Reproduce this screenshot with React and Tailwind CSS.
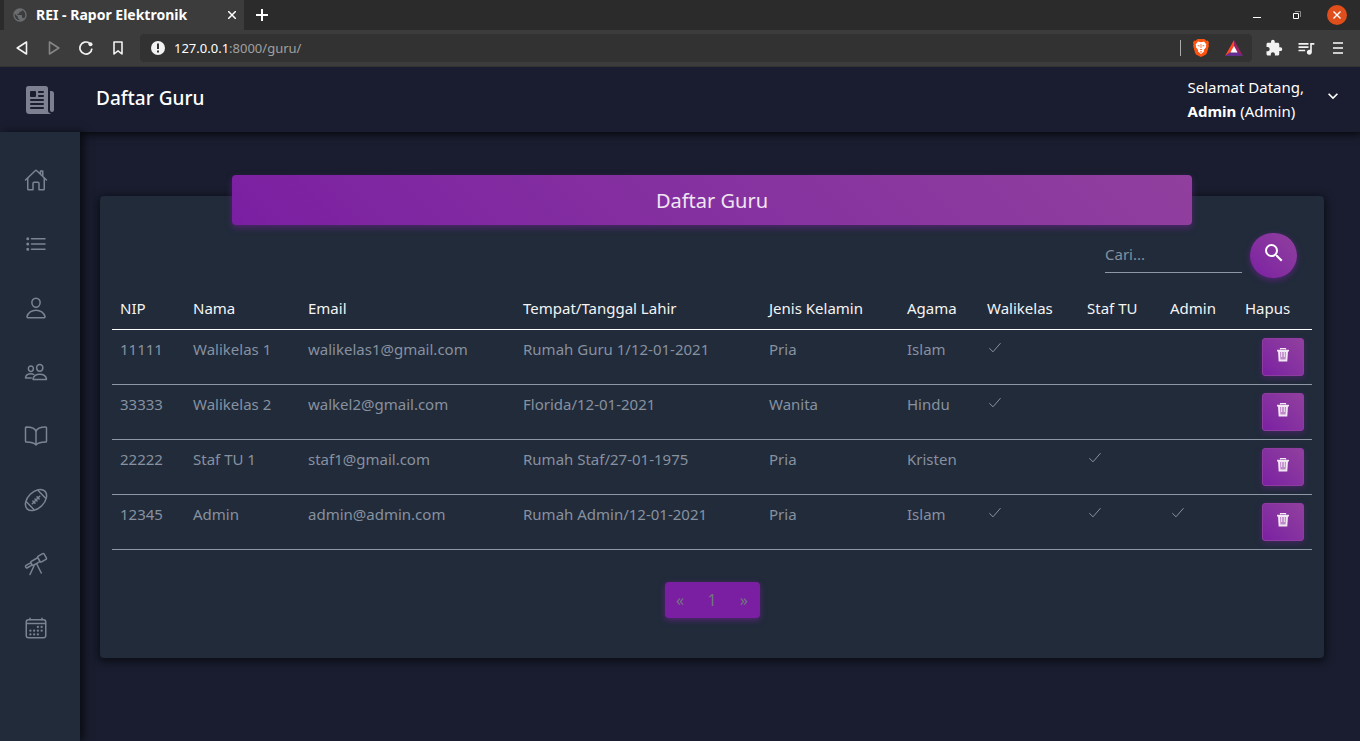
import React from "react";
import {
  IoHomeOutline,
  IoListOutline,
  IoPersonOutline,
  IoPeopleOutline,
  IoBookOutline,
  IoAmericanFootballOutline,
  IoTelescopeOutline,
  IoCalendarOutline,
  IoNewspaper,
} from "react-icons/io5";
import {
  MdSearch,
  MdExtension,
  MdQueueMusic,
  MdKeyboardArrowDown,
  MdPublic,
} from "react-icons/md";

const menu = [
  ["Beranda", IoHomeOutline],
  ["Daftar", IoListOutline],
  ["Guru", IoPersonOutline],
  ["Siswa", IoPeopleOutline],
  ["Mata Pelajaran", IoBookOutline],
  ["Ekskul", IoAmericanFootballOutline],
  ["Proyek", IoTelescopeOutline],
  ["Kalender", IoCalendarOutline],
];

const rows = [
  ["11111", "Walikelas 1", "walikelas1@gmail.com", "Rumah Guru 1/12-01-2021", "Pria", "Islam", true, false, false],
  ["33333", "Walikelas 2", "walkel2@gmail.com", "Florida/12-01-2021", "Wanita", "Hindu", true, false, false],
  ["22222", "Staf TU 1", "staf1@gmail.com", "Rumah Staf/27-01-1975", "Pria", "Kristen", false, true, false],
  ["12345", "Admin", "admin@admin.com", "Rumah Admin/12-01-2021", "Pria", "Islam", true, true, true],
];

const columns = [
  ["NIP", "w-[73px]"],
  ["Nama", "w-[115px]"],
  ["Email", "w-[215px]"],
  ["Tempat/Tanggal Lahir", "w-[246px]"],
  ["Jenis Kelamin", "w-[138px]"],
  ["Agama", "w-[80px]"],
  ["Walikelas", "w-[100px]"],
  ["Staf TU", "w-[83px]"],
  ["Admin", "w-[75px]"],
  ["Hapus", "w-[75px]"],
];

function Check() {
  return (
    <svg className="mt-[3px]" width="16" height="16" viewBox="0 0 16 16" fill="none" stroke="currentColor" strokeWidth="1" role="img" aria-label="Ya">
      <path d="M2.3 8.2 6 11.8 13.5 3.2" />
    </svg>
  );
}

function Trash() {
  return (
    <svg width="16" height="16" viewBox="0 0 16 16" aria-hidden="true">
      <path d="M5.5 2.5V1.6h5v.9" fill="none" stroke="#f1e8f4" strokeWidth="1.2" />
      <path d="M2 2.8h12v1.7H2z" fill="#f1e8f4" />
      <path d="M3 4h10l-.7 10.5H3.7z" fill="#f1e8f4" />
      <path d="M5 5h6l-.4 7.6H5.4z" fill="#bd87c8" />
      <path d="M6.7 5v5M9.3 5v5" stroke="#f1e8f4" strokeWidth="1" />
    </svg>
  );
}

function BraveShield() {
  return (
    <svg width="16" height="18" viewBox="0 0 16 18" aria-hidden="true">
      <path d="M4.5 0h7l1.8 1.7 1.4-.2L16 3.6l-.5 1.6.4 1.5-2 7.2c-.3 1-1 1.6-1.8 2.2L8 18l-4.1-1.9c-.8-.6-1.5-1.2-1.8-2.2L.1 6.7l.4-1.5L0 3.6l1.3-2.1 1.4.2z" fill="#fb5310" />
      <path d="m8 3.2 3-.7 2.4 3-.5 1.200.3 1.400-2.400 2.800.2 1.600L8 14.900l-3-2.400.2-1.600L2.800 8.100l.3-1.400-.5-1.200L5 2.500z" fill="#fff" />
      <path d="m4.200 6 2.400.5-.5 1.300zM11.800 6l-2.400.5.5 1.300zM7.600 5h.8v4h-.8zM6.500 10h3L8 11.200zM6.700 12.800 8 12.300l1.300.5L8 13.700z" fill="#fb5310" />
    </svg>
  );
}

function BatTriangle() {
  return (
    <svg width="18" height="16" viewBox="0 0 18 16" aria-hidden="true">
      <path d="M9 0 0 16l9-6z" fill="#ff4724" />
      <path d="m9 0 9 16-9-6z" fill="#9e1f63" />
      <path d="M0 16h18l-9-6z" fill="#662d91" />
      <path d="m9 6 3.600 6.400H5.400z" fill="#fff" />
    </svg>
  );
}

function Browser() {
  return (
    <div className="relative z-30 bg-[#3c3c3c]">
      <div className="flex h-[30px] items-stretch bg-[#2b2b2b] pl-1">
        <div className="flex w-60 items-center bg-[#3c3c3c] pr-1 pl-2 text-white">
          <MdPublic className="size-4 text-[#6a6d70]" />
          <span className="ml-2 grow whitespace-nowrap text-sm font-bold">REI - Rapor Elektronik</span>
          <button aria-label="Tutup tab" className="flex size-4 items-center justify-center">
            <svg width="8" height="8" viewBox="0 0 8 8" stroke="currentColor" strokeWidth="1.500"><path d="m0 0 8 8M8 0 0 8" /></svg>
          </button>
        </div>
        <button aria-label="Tab baru" className="flex w-9 items-center justify-center text-white">
          <svg width="12" height="12" viewBox="0 0 12 12" stroke="currentColor" strokeWidth="2"><path d="M6 0v12M0 6h12" /></svg>
        </button>
        <div className="ml-auto flex items-center gap-5 pr-[13px] text-white">
          <button aria-label="Minimalkan" className="flex size-5 items-center justify-center">
            <svg width="8" height="8" viewBox="0 0 8 8"><path d="M0 6h8v1H0z" fill="currentColor" /></svg>
          </button>
          <button aria-label="Pulihkan" className="flex size-5 items-center justify-center">
            <svg width="8" height="8" viewBox="0 0 8 8" fill="none"><path d="M.5 2.500h5v5h-5z" stroke="#fff" /><path d="M2 .5h5.500V6" stroke="#8a8a8a" /></svg>
          </button>
          <button aria-label="Tutup" className="flex size-5 items-center justify-center rounded-full bg-[#e04e1b]">
            <svg width="8" height="8" viewBox="0 0 8 8" stroke="currentColor" strokeWidth="1.400"><path d="m.5.5 7 7m0-7-7 7" /></svg>
          </button>
        </div>
      </div>
      <div className="flex h-[37px] items-center border-b border-[#333] px-3 text-[#f2f2f2]">
        <div className="flex items-center gap-3">
          <button aria-label="Kembali" className="flex size-5 items-center justify-center">
            <svg width="12" height="14" viewBox="0 0 12 14" fill="none" stroke="currentColor" strokeWidth="1.600" strokeLinejoin="round"><path d="M10.500 1v12L1.200 7z" /></svg>
          </button>
          <button aria-label="Maju" className="flex size-5 items-center justify-center text-[#858585]">
            <svg width="12" height="14" viewBox="0 0 12 14" fill="none" stroke="currentColor" strokeWidth="1.600" strokeLinejoin="round"><path d="M1.500 1v12L10.800 7z" /></svg>
          </button>
          <button aria-label="Muat ulang" className="flex size-5 items-center justify-center">
            <svg width="14" height="14" viewBox="0 0 14 14" fill="none" stroke="currentColor" strokeWidth="1.700"><path d="M12.900 7.600A6 6 0 1 1 10.500 2.200" /><circle cx="11.500" cy="3.300" r="2" fill="currentColor" stroke="none" /></svg>
          </button>
          <button aria-label="Markah" className="flex size-5 items-center justify-center">
            <svg width="10" height="14" viewBox="0 0 10 14" fill="none" stroke="currentColor" strokeWidth="1.600" strokeLinejoin="round"><path d="M1 1h8v12L5 9.800 1 13z" /></svg>
          </button>
        </div>
        <div className="ml-3 flex h-7 grow items-center rounded bg-[#323232] pr-[9px] pl-[11px]">
          <svg width="14" height="14" viewBox="0 0 14 14" aria-hidden="true">
            <circle cx="7" cy="7" r="7" fill="#f2f2f2" />
            <path d="M6 2.500h2v5.500H6zM6 9.500h2v2H6z" fill="#323232" />
          </svg>
          <span className="ml-[9px] text-[13px] text-[#a0a0a0]"><span className="text-white">127.0.0.1</span>:8000/guru/</span>
          <div className="ml-auto flex items-center gap-4">
            <span className="-mr-1 h-4 w-px bg-[#aaa]" />
            <BraveShield />
            <BatTriangle />
          </div>
        </div>
        <div className="ml-3 flex items-center gap-3">
          <MdExtension className="size-5 p-px" />
          <MdQueueMusic className="size-5" />
          <button aria-label="Menu" className="flex size-5 items-center justify-center">
            <svg width="10" height="12" viewBox="0 0 10 12" fill="#ccc"><path d="M0 0h10v2H0zM0 5h10v2H0zM0 10h10v2H0z" /></svg>
          </button>
        </div>
      </div>
    </div>
  );
}

export default function App() {
  return (
    <div className="flex min-h-screen flex-col bg-[#191d2f] font-['Noto_Sans','Open_Sans',sans-serif] text-[15px] leading-6 text-white">
      <Browser />
      <header className="z-10 flex h-[65px] items-center bg-[#191d2f] pr-[17px] shadow-[0_0_8px_2px_rgba(0,0,0,0.8)]">
        <a href="#beranda" aria-label="Rapor Elektronik" className="flex w-20 justify-center text-[#7d8090]">
          <IoNewspaper className="size-8" />
        </a>
        <h1 className="pb-1 pl-4 text-[19px] font-medium">Daftar Guru</h1>
        <button className="ml-auto flex items-center gap-[19px] pb-px text-left">
          <span>Selamat Datang,<br /><b>Admin</b> (Admin)</span>
          <MdKeyboardArrowDown className="mb-[7px] size-5" />
        </button>
      </header>
      <div className="flex grow">
        <nav aria-label="Menu utama" className="z-20 flex w-20 shrink-0 flex-col gap-10 bg-[#212b3a] pt-9 text-[#7b8491] shadow-[4px_0_8px_rgba(0,0,0,0.6)]">
          {menu.map(([label, Icon]) => (
            <a key={label} href="#menu" aria-label={label} className="ml-6 flex size-6">
              <Icon className="size-6" />
            </a>
          ))}
        </nav>
        <main className="min-w-0 grow pt-[43px] pr-9 pb-10 pl-5">
          <section className="mt-[21px] rounded bg-[#212b3a] px-3 pb-10 shadow-[0_2px_8px_2px_rgba(0,0,0,0.55)]">
            <h2 className="relative -top-[21px] mx-auto -mb-[13px] h-[50px] w-4/5 rounded bg-linear-45 from-[#7b1fa2] to-[#913f9e] text-center text-xl leading-[52px] text-[#f0e6f3] shadow-[0_3px_6px_rgba(123,31,162,0.5)]">
              Daftar Guru
            </h2>
            <form className="flex justify-end gap-2 pr-[15px]" onSubmit={(e) => e.preventDefault()}>
              <input
                type="text"
                aria-label="Cari"
                placeholder="Cari..."
                className="mb-[5px] h-[35px] w-[137px] self-end border-b border-[#8d97a5] bg-transparent pb-0.5 outline-none placeholder:text-[#8391a0]"
              />
              <button aria-label="Cari guru" className="flex h-[45px] w-[47px] justify-center rounded-full bg-linear-45 from-[#7b1fa2] to-[#913f9e] pt-2 shadow-[0_2px_6px_rgba(123,31,162,0.6)]">
                <MdSearch className="size-6" />
              </button>
            </form>
            <table className="mt-[10px] w-full table-fixed border-collapse text-left">
              <thead>
                <tr className="h-[41px] border-b border-white">
                  {columns.map(([label, width]) => (
                    <th key={label} scope="col" className={"px-2 font-normal whitespace-nowrap text-[#f4f4f4] " + width}>{label}</th>
                  ))}
                </tr>
              </thead>
              <tbody className="text-[#8791a0]">
                {rows.map((row) => (
                  <tr key={row[0]} className="h-[55px] border-b border-[#8d97a5]">
                    {row.map((cell, i) => (
                      <td key={i} className="px-2 pt-[7px] align-top whitespace-nowrap">
                        {cell === true ? <Check /> : cell === false ? null : cell}
                      </td>
                    ))}
                    <td className="px-2 pt-2 align-top">
                      <button aria-label="Hapus" className="ml-auto flex h-[38px] w-[42px] justify-center rounded-[3px] border border-[#8e3ca0] bg-linear-45 from-[#7b1fa2] to-[#913f9e] pt-2 shadow-[0_2px_6px_rgba(123,31,162,0.4)]">
                        <Trash />
                      </button>
                    </td>
                  </tr>
                ))}
              </tbody>
            </table>
            <nav aria-label="Halaman" className="mx-auto mt-8 flex h-9 w-[95px] items-center rounded bg-[#7b1fa2] text-base leading-6 text-[#727680] shadow-[0_2px_6px_rgba(123,31,162,0.6)]">
              <button aria-label="Sebelumnya" className="grow">«</button>
              <button className="grow">1</button>
              <button aria-label="Berikutnya" className="grow">»</button>
            </nav>
          </section>
        </main>
      </div>
    </div>
  );
}
